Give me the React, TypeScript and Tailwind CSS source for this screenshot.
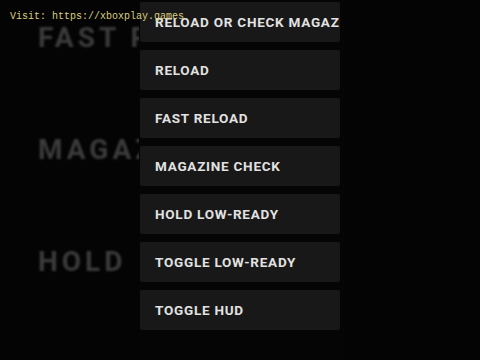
import React from "react";

const items = [
  "RELOAD OR CHECK MAGAZINE",
  "RELOAD",
  "FAST RELOAD",
  "MAGAZINE CHECK",
  "HOLD LOW-READY",
  "TOGGLE LOW-READY",
  "TOGGLE HUD",
];

const bgLabels = ["FAST RELOAD", "MAGAZINE", "HOLD"];

const App = () => {
  return (
    <div className="relative flex h-[360px] w-[480px] overflow-hidden bg-[#040404] font-['Roboto',sans-serif]">
      {/* blurred labels behind the menu */}
      <div className="flex w-[139px] shrink-0 flex-col gap-[84px] pl-[38px] pt-[24px]">
        {bgLabels.map((label) => (
          <p
            key={label}
            className="whitespace-nowrap text-[28px] font-bold leading-[28px] tracking-[4px] text-[#3b3b3b] blur-[0.8px]"
          >
            {label}
          </p>
        ))}
      </div>

      {/* menu */}
      <div className="relative z-10 flex w-[206px] shrink-0 flex-col gap-2 bg-[#050505] pl-px pr-[5px] pt-[2px]">
        {items.map((item) => (
          <div
            key={item}
            className="flex h-10 items-center overflow-hidden rounded-[2px] bg-[#181818] pl-[15px]"
          >
            <span className="whitespace-nowrap text-[13.5px] font-bold tracking-[0.75px] text-[#e2e2e2]">
              {item}
            </span>
          </div>
        ))}
      </div>

      {/* watermark */}
      <p className="absolute left-[10px] top-[11px] z-20 whitespace-nowrap font-['Liberation_Mono',monospace] text-[10px] leading-[12px] text-[#d9cf80]">
        Visit: https://xboxplay.games
      </p>
    </div>
  );
};

export default App;
